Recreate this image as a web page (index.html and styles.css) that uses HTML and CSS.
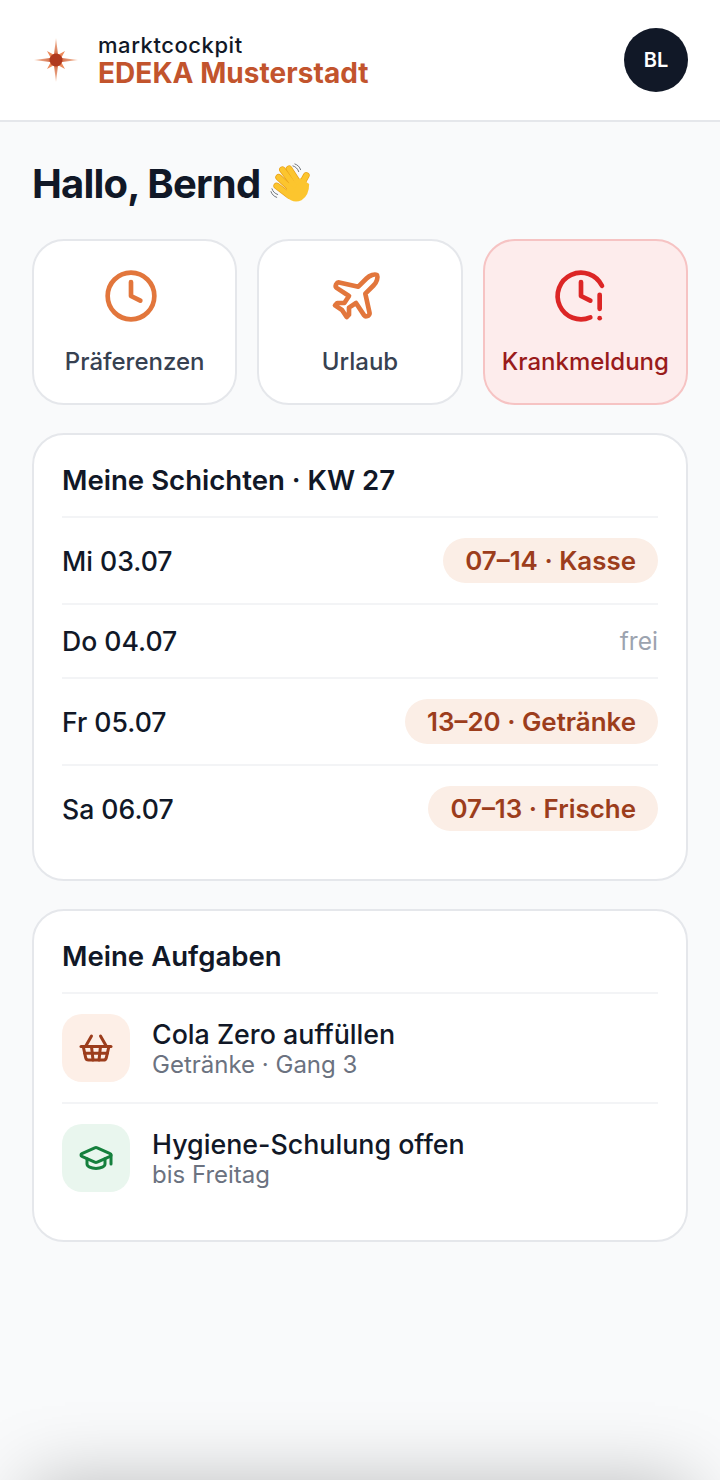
FILE: index.html
```html
<!DOCTYPE html>
<html lang="de">
<head>
<meta charset="utf-8">
<title>marktcockpit</title>
<link rel="stylesheet" href="styles.css">
</head>
<body>
<div class="app">
  <header class="topbar">
    <div class="brand">
      <svg class="logo" viewBox="0 0 44 44" aria-hidden="true">
        <defs>
          <linearGradient id="rayV" x1="0" y1="0" x2="0" y2="1"><stop offset="0" stop-color="#f6c7aa"/><stop offset=".5" stop-color="#c9512a"/><stop offset="1" stop-color="#f6c7aa"/></linearGradient>
          <linearGradient id="rayH" x1="0" y1="0" x2="1" y2="0"><stop offset="0" stop-color="#f6c7aa"/><stop offset=".5" stop-color="#c9512a"/><stop offset="1" stop-color="#f6c7aa"/></linearGradient>
        </defs>
        <path d="M22 0 L24.2 18 L22 24 L19.8 18 Z M22 44 L24.2 26 L19.8 26 Z" fill="url(#rayV)"/>
        <path d="M0 22 L18 19.8 L24 22 L18 24.2 Z M44 22 L26 19.8 L26 24.2 Z" fill="url(#rayH)"/>
        <path d="M13 13 L24 19 L19 24 Z M31 13 L20 19 L25 24 Z M13 31 L24 25 L19 20 Z M31 31 L20 25 L25 20 Z" fill="#ec8a5b"/>
        <circle cx="22" cy="22" r="6.5" fill="#b0391f"/>
      </svg>
      <div class="brand-text">
        <div class="brand-name">marktcockpit</div>
        <div class="brand-store">EDEKA Musterstadt</div>
      </div>
    </div>
    <div class="avatar">BL</div>
  </header>

  <main class="content">
    <h1 class="greeting">Hallo, Bernd
      <svg class="wave" viewBox="4 2 46 44" aria-hidden="true">
        <g fill="none" stroke="#6b6f76" stroke-width="1" stroke-linecap="round">
          <path d="M28 5c3 1 5 3 6 6"/><path d="M30 3c3 1 5 3 6 6"/>
          <path d="M6 29c1 3 3 5 6 6"/><path d="M5 32c1 3 3 5 6 6"/>
        </g>
        <g fill="none" stroke-linecap="round">
          <g stroke="#e9a31a" stroke-width="7">
            <path d="M24 8 33 22"/><path d="M17 9 29 25"/><path d="M13 17 27 30"/><path d="M11 26 24 36"/><path d="M36 26 42 15"/>
          </g>
        </g>
        <path d="M22 24 36 18 45 24Q45 36 37 41 28 45 21 37Z" fill="#fcc52e"/>
        <g fill="none" stroke-linecap="round" stroke="#fcc52e" stroke-width="5.4">
          <path d="M24 8 33 22"/><path d="M17 9 29 25"/><path d="M13 17 27 30"/><path d="M11 26 24 36"/><path d="M36 26 42 15"/>
        </g>
      </svg>
    </h1>

    <nav class="tiles">
      <a class="tile">
        <svg class="tile-icon icon-orange" viewBox="0 0 24 24"><circle cx="12" cy="12" r="10"/><polyline points="12 6 12 12 16 14"/></svg>
        <span class="tile-label">Präferenzen</span>
      </a>
      <a class="tile">
        <svg class="tile-icon icon-orange" viewBox="0 0 24 24"><path d="M17.8 19.2 16 11l3.5-3.5C21 6 21.5 4 21 3c-1-.5-3 0-4.5 1.5L13 8 4.8 6.2c-.5-.1-.9.1-1.1.5l-.3.5c-.2.5-.1 1 .3 1.3L9 12l-2 3H4l-1 1 3 2 2 3 1-1v-3l3-2 3.5 5.3c.3.4.8.5 1.3.3l.5-.2c.4-.3.6-.7.5-1.2z"/></svg>
        <span class="tile-label">Urlaub</span>
      </a>
      <a class="tile tile-alert">
        <svg class="tile-icon icon-red" viewBox="0 0 24 24"><path d="M12 6v6l4 2"/><path d="M16 21.16a10 10 0 1 1 5-13.516"/><path d="M20 11.5v6"/><path d="M20 21.5h.01"/></svg>
        <span class="tile-label">Krankmeldung</span>
      </a>
    </nav>

    <section class="card">
      <h2 class="card-title">Meine Schichten · KW 27</h2>
      <div class="row"><span class="day">Mi 03.07</span><span class="pill">07–14 · Kasse</span></div>
      <div class="row"><span class="day">Do 04.07</span><span class="off">frei</span></div>
      <div class="row"><span class="day">Fr 05.07</span><span class="pill">13–20 · Getränke</span></div>
      <div class="row"><span class="day">Sa 06.07</span><span class="pill">07–13 · Frische</span></div>
    </section>

    <section class="card">
      <h2 class="card-title">Meine Aufgaben</h2>
      <div class="task">
        <div class="task-icon task-icon-orange">
          <svg viewBox="0 0 24 24"><path d="m15 11-1 9"/><path d="m19 11-4-7"/><path d="M2 11h20"/><path d="m3.5 11 1.6 7.4a2 2 0 0 0 2 1.6h9.8a2 2 0 0 0 2-1.6l1.7-7.4"/><path d="M4.5 15.5h15"/><path d="m5 11 4-7"/><path d="m9 11 1 9"/></svg>
        </div>
        <div class="task-text"><div class="task-title">Cola Zero auffüllen</div><div class="task-sub">Getränke · Gang 3</div></div>
      </div>
      <div class="task">
        <div class="task-icon task-icon-green">
          <svg viewBox="0 0 24 24"><path d="M21.42 10.922a1 1 0 0 0-.019-1.838L12.83 5.18a2 2 0 0 0-1.66 0L2.6 9.08a1 1 0 0 0 0 1.832l8.57 3.908a2 2 0 0 0 1.66 0z"/><path d="M22 10v6"/><path d="M6 12.5V16a6 3 0 0 0 12 0v-3.5"/></svg>
        </div>
        <div class="task-text"><div class="task-title">Hygiene-Schulung offen</div><div class="task-sub">bis Freitag</div></div>
      </div>
    </section>
  </main>
  <div class="bottom-shadow"></div>
</div>
</body>
</html>
```
FILE: styles.css
```css
* { box-sizing: border-box; }
html, body { margin: 0; height: 100%; }
body { background: #f9fafb; font-family: Inter, "Liberation Sans", sans-serif; color: #111827; overflow: hidden; }
.app { position: relative; height: 1480px; overflow: hidden; }

.topbar { display: flex; align-items: center; justify-content: space-between; height: 122px; padding: 0 32px; background: #fff; border-bottom: 2px solid #e5e7eb; }
.brand { display: flex; align-items: center; gap: 20px; }
.logo { width: 44px; height: 44px; margin-left: 2px; }
.brand-text { display: flex; flex-direction: column; }
.brand-name { font-size: 22px; line-height: 27px; font-weight: 500; letter-spacing: .55px; color: #111827; }
.brand-store { font-size: 28px; line-height: 29px; font-weight: 700; letter-spacing: .05px; color: #c2542d; }
.avatar { width: 64px; height: 64px; border-radius: 50%; background: #111827; color: #fff; display: flex; align-items: center; justify-content: center; font-size: 20px; font-weight: 600; }

.content { padding: 40px 32px 0; display: flex; flex-direction: column; }
.greeting { margin: 0 0 33px; font-size: 40px; line-height: 44px; font-weight: 700; letter-spacing: -.8px; display: flex; align-items: center; gap: 10px; }
.wave { width: 44px; height: 42px; flex: none; }

.tiles { display: grid; grid-template-columns: repeat(3, 1fr); gap: 20px; margin-bottom: 28px; }
.tile { display: flex; flex-direction: column; align-items: center; gap: 22px; height: 166px; padding-top: 27px; background: #fff; border: 2px solid #e5e7eb; border-radius: 32px; }
.tile-icon { width: 56px; height: 56px; margin-right: 8px; fill: none; stroke-width: 2; stroke-linecap: round; stroke-linejoin: round; }
.icon-orange { stroke: #e2763c; }
.icon-red { stroke: #dc2626; }
.tile-label { font-size: 24px; line-height: 32px; font-weight: 500; color: #374151; }
.tile-alert { background: #fdecec; border-color: #f6c3c3; }
.tile-alert .tile-label { color: #991b1b; }

.card { background: #fff; border: 2px solid #e5e7eb; border-radius: 32px; padding: 28px; margin-bottom: 28px; }
.card-title { margin: 0; font-size: 27.6px; line-height: 35px; font-weight: 600; padding-bottom: 18px; }
.row { display: flex; align-items: center; justify-content: space-between; padding: 20px 0; border-top: 2px solid #f3f4f6; }
.day { font-size: 26.6px; line-height: 32px; font-weight: 500; }
.pill { font-size: 25.9px; line-height: 32px; font-weight: 600; color: #9c3d1c; background: #fbeee6; border-radius: 999px; padding: 6.5px 22px; }
.off { font-size: 24.6px; line-height: 32px; color: #9ca3af; }

.task { display: flex; align-items: center; gap: 22px; padding: 20px 0; border-top: 2px solid #f3f4f6; }
.task-icon { width: 68px; height: 68px; border-radius: 20px; display: flex; align-items: center; justify-content: center; flex: none; }
.task-icon svg { width: 36px; height: 36px; fill: none; stroke-width: 2; stroke-linecap: round; stroke-linejoin: round; }
.task-icon-orange { background: #fdefe7; }
.task-icon-orange svg { stroke: #9c3d1c; }
.task-icon-green { background: #e9f6ee; }
.task-icon-green svg { stroke: #15803d; }
.task-text { padding-top: 2px; }
.task-title { font-size: 26.8px; line-height: 32px; font-weight: 500; }
.task-sub { font-size: 24px; line-height: 30px; color: #6b7280; }

.bottom-shadow { position: absolute; left: 0; right: 0; top: 1480px; height: 300px; box-shadow: 0 -28px 70px -30px rgba(0,0,0,.25); }
```
